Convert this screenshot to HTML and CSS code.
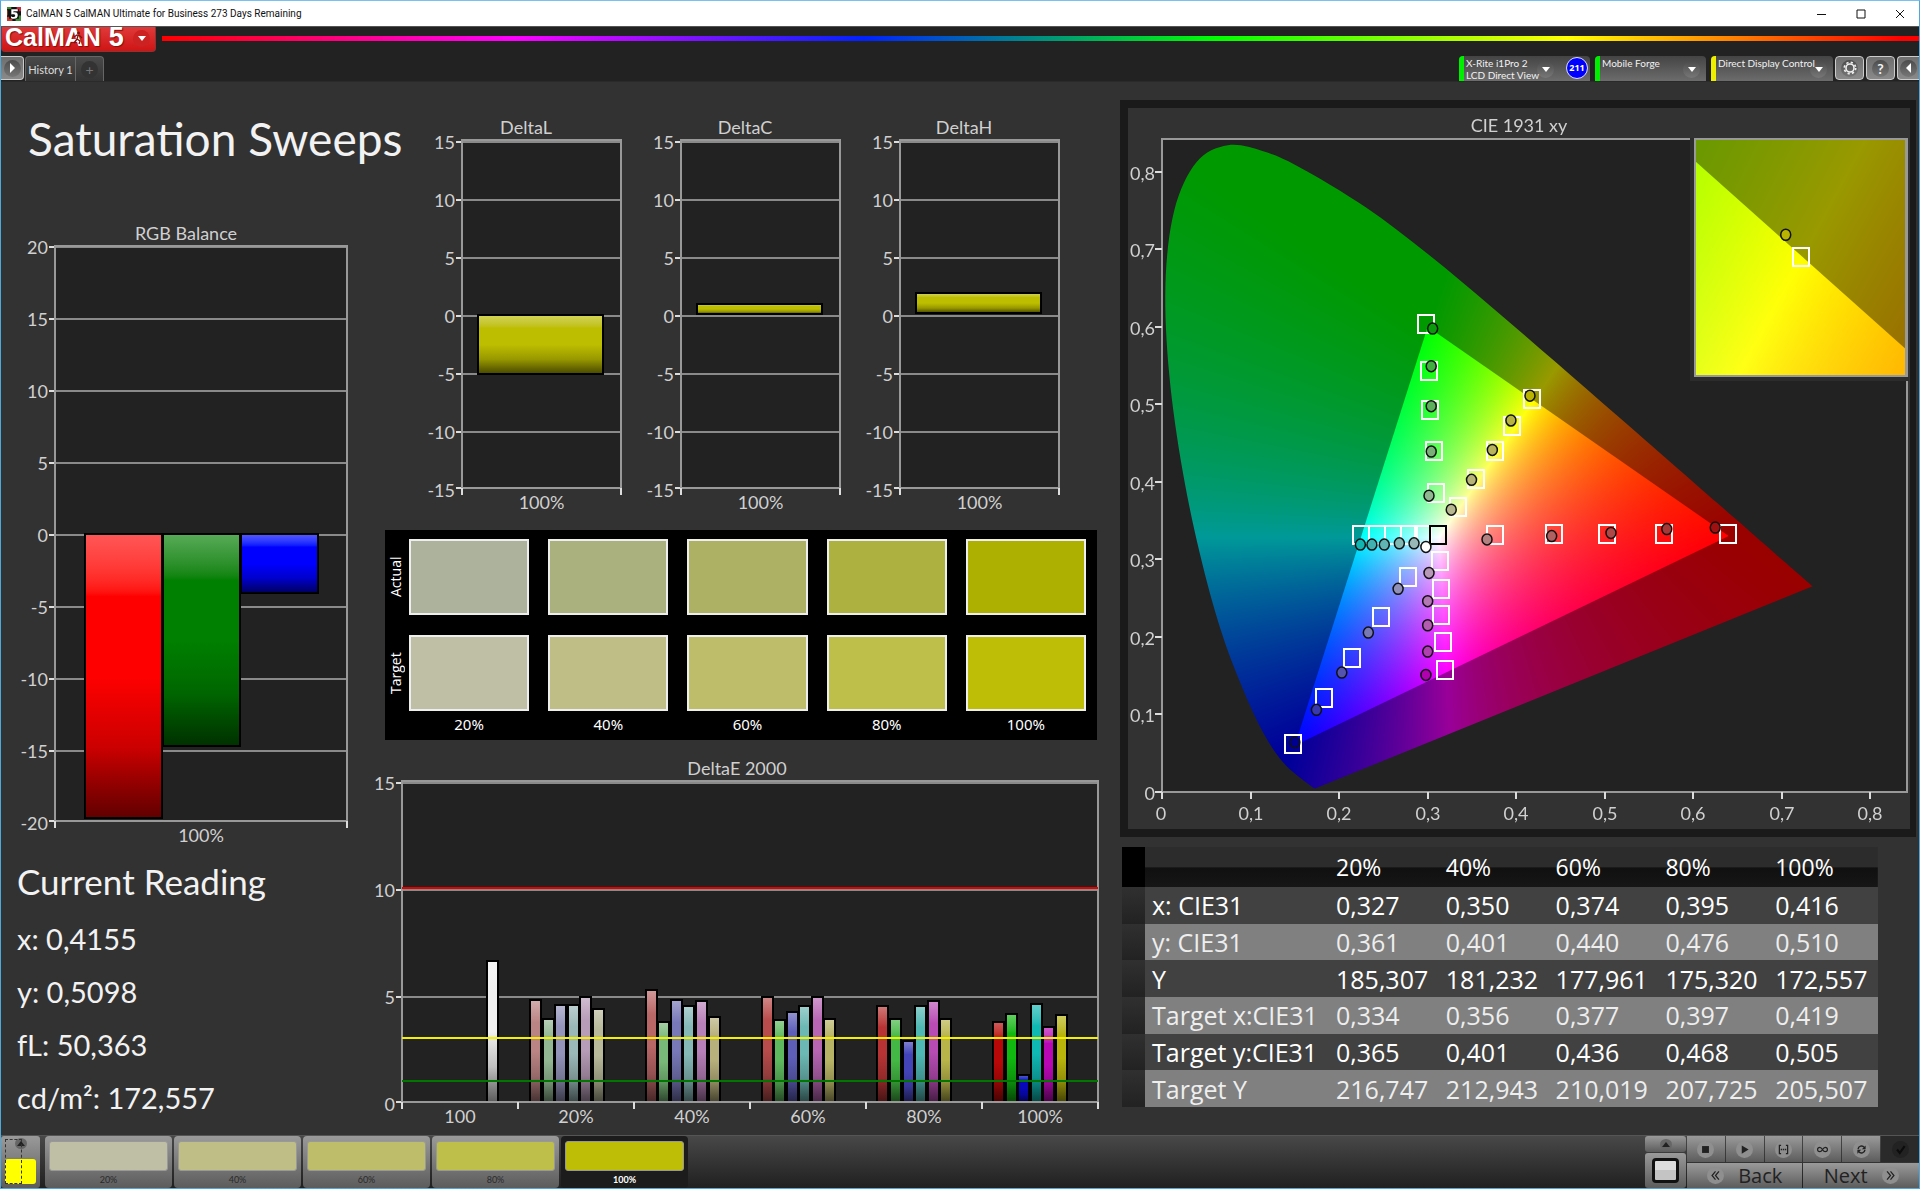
FILE: index.html
```html
<!DOCTYPE html>
<html lang="en">
<head>
<meta charset="utf-8">
<title>CalMAN 5 CalMAN Ultimate for Business</title>
<meta name="viewport" content="width=device-width, initial-scale=1">
<link rel="stylesheet" href="styles.css">
</head>
<body>
<div class="titlebar">
  <svg class="app-icon" viewBox="0 0 13 13" aria-hidden="true">
    <rect width="13" height="13" fill="#111"/>
    <path d="M0 0h4v2H0z" fill="#3a8f2c"/><path d="M9 0h4v4h-2V2H9z" fill="#c02a3a"/><path d="M0 9h2v2h3v2H0z" fill="#c23b2c"/><path d="M11 8h2v5H8v-2h3z" fill="#3d8a36"/><path d="M0 3h1v5H0z" fill="#7a3d1b"/>
    <path d="M4 2h6v2H6v1c3-.4 4 .6 4 2.700 0 2.300-1.500 3.300-3.500 3.300-1.200 0-2.200-.300-2.800-.800V8.500c.7.500 1.500.8 2.400.8.900 0 1.500-.500 1.500-1.400 0-1.200-1.500-1.300-3.600-1z" fill="#fff"/>
  </svg>
  <span class="caption">CalMAN 5 CalMAN Ultimate for Business 273 Days Remaining</span>
  <div class="window-buttons">
    <button aria-label="Minimize"><svg viewBox="0 0 10 10"><path d="M0 5.500h9"/></svg></button>
    <button aria-label="Maximize"><svg viewBox="0 0 10 10"><path d="M1 1h8v8H1z"/></svg></button>
    <button aria-label="Close"><svg viewBox="0 0 10 10"><path d="M1 1l8 8M9 1L1 9"/></svg></button>
  </div>
</div>

<header class="header">
  <div class="brand-row">
    <button class="brand" aria-label="CalMAN 5 menu">
      <span class="brand-name">CalMAN</span><span class="brand-number">5</span>
      <svg class="runner" viewBox="0 0 12 14" aria-hidden="true"><circle cx="6.500" cy="2" r="1.500" fill="#7c1010"/><path d="M2 6l3-2 3 1 2 2M6 5L5 8l3 2-1 3M5 8l-3 4" fill="none" stroke="#7c1010" stroke-width="1.300"/></svg>
      <span class="brand-arrow"><i class="tri-down"></i></span>
    </button>
    <div class="rainbow"></div>
  </div>
  <div class="tab-row">
    <button class="square flush-left" aria-label="Expand panel"><span class="knob"><i class="tri-right"></i></span></button>
    <nav class="tabs">
      <button class="tab">History 1</button>
      <button class="tab add" aria-label="Add history"><span class="knob dim">+</span></button>
    </nav>
    <div class="devices">
      <div class="device meter">
        <button class="device-main ok"><span class="device-name">X-Rite i1Pro 2<br>LCD Direct View</span><span class="knob"><i class="tri-down"></i></span></button>
        <span class="count">211</span>
      </div>
      <div class="device source"><button class="device-main ok"><span class="device-name">Mobile Forge</span><span class="knob"><i class="tri-down"></i></span></button></div>
      <div class="device display"><button class="device-main warn"><span class="device-name">Direct Display Control</span><span class="knob"><i class="tri-down"></i></span></button></div>
      <div class="tools">
        <button class="square" aria-label="Settings"><span class="knob"><svg viewBox="0 0 14 14"><circle cx="7" cy="7" r="4" fill="none" stroke="#eee" stroke-width="1.600"/><circle cx="7" cy="7" r="5.700" fill="none" stroke="#eee" stroke-width="1.700" stroke-dasharray="2.240 2.240"/></svg></span></button>
        <button class="square help" aria-label="Help"><span class="knob">?</span></button>
        <button class="square flush-right" aria-label="Collapse panel"><span class="knob"><i class="tri-left"></i></span></button>
      </div>
    </div>
  </div>
</header>

<main class="workspace">
  <section class="col-left">
    <h1>Saturation Sweeps</h1>
    <svg class="chart" id="rgb-balance" viewBox="0 0 384 632" role="img" aria-label="RGB Balance"></svg>
    <div class="reading">
      <h2>Current Reading</h2>
      <p>x: 0,4155</p>
      <p>y: 0,5098</p>
      <p>fL: 50,363</p>
      <p>cd/m²: 172,557</p>
    </div>
  </section>

  <section class="col-mid">
    <div class="deltas">
      <svg class="chart" id="delta-l" viewBox="0 0 219 406" role="img" aria-label="DeltaL"></svg>
      <svg class="chart" id="delta-c" viewBox="0 0 219 406" role="img" aria-label="DeltaC"></svg>
      <svg class="chart" id="delta-h" viewBox="0 0 219 406" role="img" aria-label="DeltaH"></svg>
    </div>
    <div class="swatches">
      <span class="side">Actual</span>
      <i class="a20"></i><i class="a40"></i><i class="a60"></i><i class="a80"></i><i class="a100"></i>
      <span class="side">Target</span>
      <i class="t20"></i><i class="t40"></i><i class="t60"></i><i class="t80"></i><i class="t100"></i>
      <span></span><b>20%</b><b>40%</b><b>60%</b><b>80%</b><b>100%</b>
    </div>
    <svg class="chart" id="delta-e" viewBox="0 0 727 380" role="img" aria-label="DeltaE 2000"></svg>
  </section>

  <section class="col-right">
    <div class="cie">
      <canvas id="cie-field" width="782" height="721"></canvas>
      <svg class="chart" id="cie-chart" viewBox="0 0 782 721" role="img" aria-label="CIE 1931 xy"></svg>
    </div>
    <table class="data">
      <colgroup><col class="c-gutter"><col class="c-name"><col><col><col><col><col></colgroup>
      <thead><tr><td class="gutter"></td><td></td><th scope="col">20%</th><th scope="col">40%</th><th scope="col">60%</th><th scope="col">80%</th><th scope="col">100%</th></tr></thead>
      <tbody>
        <tr><td class="gutter"></td><th scope="row">x: CIE31</th><td>0,327</td><td>0,350</td><td>0,374</td><td>0,395</td><td>0,416</td></tr>
        <tr><td class="gutter"></td><th scope="row">y: CIE31</th><td>0,361</td><td>0,401</td><td>0,440</td><td>0,476</td><td>0,510</td></tr>
        <tr><td class="gutter"></td><th scope="row">Y</th><td>185,307</td><td>181,232</td><td>177,961</td><td>175,320</td><td>172,557</td></tr>
        <tr><td class="gutter"></td><th scope="row">Target x:CIE31</th><td>0,334</td><td>0,356</td><td>0,377</td><td>0,397</td><td>0,419</td></tr>
        <tr><td class="gutter"></td><th scope="row">Target y:CIE31</th><td>0,365</td><td>0,401</td><td>0,436</td><td>0,468</td><td>0,505</td></tr>
        <tr><td class="gutter"></td><th scope="row">Target Y</th><td>216,747</td><td>212,943</td><td>210,019</td><td>207,725</td><td>205,507</td></tr>
      </tbody>
    </table>
  </section>
</main>

<footer class="footer">
  <button class="pattern" aria-label="Pattern colour"><span class="mini"><i class="tri-up"></i></span><i class="patch"></i></button>
  <div class="levels">
    <button class="level"><i class="t20"></i>20%</button>
    <button class="level"><i class="t40"></i>40%</button>
    <button class="level"><i class="t60"></i>60%</button>
    <button class="level"><i class="t80"></i>80%</button>
    <button class="level current"><i class="t100"></i>100%</button>
  </div>
  <div class="transport">
    <div class="window-pick">
      <button aria-label="Show options"><span class="mini"><i class="tri-up"></i></span></button>
      <button aria-label="Window size"><i class="frame"></i></button>
    </div>
    <div class="actions">
      <button aria-label="Stop"><span class="disc"><svg viewBox="0 0 16 16"><path d="M3 3h10v10H3z"/></svg></span></button>
      <button aria-label="Read"><span class="disc"><svg viewBox="0 0 16 16"><path d="M4 2l10 6-10 6z"/></svg></span></button>
      <button aria-label="Read series"><span class="disc"><svg viewBox="0 0 16 16"><path d="M4.500 2H2v12h2.500M11.500 2H14v12h-2.500" fill="none" stroke="#222" stroke-width="1.800"/><path d="M4 7h2v2H4zM7 7h2v2H7zM10 7h2v2h-2z"/></svg></span></button>
      <button aria-label="Continuous"><span class="disc"><svg viewBox="0 0 16 16"><path d="M8 8C6.500 5.500 5.500 4.800 4 4.800a3.200 3.200 0 0 0 0 6.400C5.500 11.200 6.500 10.500 8 8s2.500-3.200 4-3.200a3.200 3.200 0 0 1 0 6.400C10.500 11.200 9.500 10.500 8 8z" fill="none" stroke="#222" stroke-width="1.800"/></svg></span></button>
      <button aria-label="Refresh"><span class="disc"><svg viewBox="0 0 16 16"><path d="M3 7.500a5 5 0 0 1 9-2.500M13 8.500a5 5 0 0 1-9 2.500" fill="none" stroke="#222" stroke-width="2"/><path d="M14 2v5.500H8.500zM2 14V8.500h5.500z"/></svg></span></button>
      <button class="off" aria-label="Accept"><span class="disc"><svg viewBox="0 0 16 16"><path d="M3 8l4 5 7-10" fill="none" stroke="#0c0c0c" stroke-width="3"/></svg></span></button>
      <button class="nav"><span class="disc"><svg viewBox="0 0 16 16"><path d="M8 2L3 8l5 6M13 2L8 8l5 6" fill="none" stroke="#222" stroke-width="1.800"/></svg></span>Back</button>
      <button class="nav next">Next<span class="disc"><svg viewBox="0 0 16 16"><path d="M8 2l5 6-5 6M3 2l5 6-5 6" fill="none" stroke="#222" stroke-width="1.800"/></svg></span></button>
    </div>
  </div>
</footer>
<script src="charts.js"></script>
</body>
</html>
```
FILE: styles.css
```css
* { box-sizing: border-box; }

body {
  margin: 0;
  min-height: 100vh;
  display: flex;
  flex-direction: column;
  border: 1px solid #4fa8dc;
  border-top-color: #79c1ee;
  background: #323232;
  color: #f2f2f2;
  font-family: Lato, "Open Sans", sans-serif;
}

button {
  margin: 0;
  padding: 0;
  border: 0;
  background: none;
  color: inherit;
  font: inherit;
}

i { display: block; }

.tri-down, .tri-up { width: 0; border: 4px solid transparent; }
.tri-down { border-top: 5px solid #fff; border-bottom: 0; }
.tri-up { border-bottom: 5px solid #222; border-top: 0; }
.tri-right, .tri-left { width: 0; border: 5px solid transparent; }
.tri-right { border-left-color: #fff; border-right: 0; }
.tri-left { border-right-color: #fff; border-left: 0; }

/* Window title bar */
.titlebar {
  display: flex;
  align-items: center;
  height: 25px;
  padding-left: 6px;
  background: #fff;
  color: #111;
}
.app-icon { width: 14px; height: 14px; }
.caption { margin-left: 5px; font: 10px/16px Roboto, sans-serif; }
.window-buttons { display: flex; margin-left: auto; }
.window-buttons button { display: grid; place-items: center; width: 39px; height: 24px; }
.window-buttons svg { width: 10px; height: 10px; fill: none; stroke: #111; }

/* Application header */
.header { background: #222; border-top: 1px solid #555; }
.brand-row { display: flex; height: 29px; }
.brand {
  position: relative;
  display: flex;
  align-items: center;
  width: 155px;
  height: 25px;
  padding: 0 0 5px 3px;
  border: 1px solid #8d3333;
  border-top: 0;
  border-radius: 0 0 4px 4px;
  background: linear-gradient(#e03a3a, #cf1414);
  color: #fff;
  font: bold 25px/20px "Liberation Sans", sans-serif;
  text-shadow: 1px 1px 1px #7c1010;
}
.brand-number { margin-left: 8px; font-size: 27px; }
.runner { position: absolute; left: 70px; top: 4px; width: 12px; height: 14px; }
.brand-arrow {
  display: grid;
  place-items: center;
  width: 17px;
  height: 17px;
  margin: 4px 5px 0 auto;
  border-radius: 50%;
  background: #c22;
}
.rainbow {
  flex: 1;
  height: 5px;
  margin: 9px 0 0 6px;
  background: linear-gradient(90deg, #f00 0%, #f0f 20%, #02f 40%, #0f0 60%, #ff0 80%, #f00 99%);
}

.tab-row { display: flex; height: 25px; }
.square {
  display: grid;
  place-items: center;
  width: 29px;
  height: 24px;
  border: 1px solid #ccc;
  border-radius: 4px;
  background: linear-gradient(#6e6e6e, #8a8a8a);
}
.flush-left { width: 23px; border-left: 0; border-radius: 0 4px 4px 0; }
.flush-right { width: 22px; border-right: 0; border-radius: 4px 0 0 4px; }
.knob {
  display: grid;
  place-items: center;
  flex: none;
  width: 17px;
  height: 17px;
  border-radius: 50%;
  background: linear-gradient(#4c4c4c, #777);
  font-weight: bold;
  font-size: 14px;
  line-height: 17px;
}
.knob svg { width: 14px; height: 14px; }
.knob.dim { background: #333; color: #777; font-weight: normal; }
.tabs { display: flex; margin-left: 1px; }
.tab {
  width: 51px;
  border: 1px solid #666;
  border-bottom: 0;
  border-radius: 4px 0 0 0;
  background: linear-gradient(#4a4a4a, #333);
  color: #ddd;
  font-size: 11px;
}
.tab.add { display: grid; place-items: center; width: 28px; border-left: 0; border-radius: 0 4px 0 0; }

.devices { display: flex; margin-left: auto; }
.device {
  display: flex;
  margin-right: 5px;
  overflow: hidden;
  border-radius: 4px 4px 0 0;
  background: linear-gradient(#444, #6c6c6c);
}
.device-main {
  flex: 1;
  display: flex;
  min-width: 0;
  padding: 1px 6px 0 2px;
  border-left: 5px solid #0e0;
  font-size: 10px;
  line-height: 12px;
  text-align: left;
  white-space: nowrap;
}
.device-name { z-index: 1; flex: 1; min-width: 0; }
.device-main .knob { margin-top: 4px; }
.warn { border-left-color: #ee0; }
.meter { width: 131px; }
.meter .device-main { padding-right: 12px; }
.source { width: 111px; }
.display { width: 122px; margin-right: 2px; }
.count {
  flex: none;
  width: 22px;
  height: 22px;
  margin: 1px 2px 0 0;
  border: 1px solid #ddf;
  border-radius: 50%;
  background: #00f;
  color: #fff;
  font: bold 9px/20px "Open Sans", sans-serif;
  text-align: center;
}
.tools { display: flex; gap: 2px; }

/* Workspace */
.workspace {
  flex: 1;
  display: grid;
  grid-template-columns: minmax(0, 384fr) minmax(0, 727fr) minmax(0, 807fr);
  align-items: start;
  border-top: 1px solid #2a2a2a;
}
.chart { display: block; width: 100%; overflow: visible; }
.chart text { fill: #d0d0d0; font-size: 18px; }

h1 { margin: 13px 0 39px 27px; font-weight: normal; font-size: 46px; line-height: 88px; white-space: nowrap; }
h2 { margin: 0 0 4px; font-weight: normal; font-size: 35px; line-height: 54px; }
.reading { padding: 0 0 0 16px; }
.reading p { margin: 0; font-size: 29px; line-height: 53px; }

.deltas { display: grid; grid-template-columns: repeat(3, 1fr); padding: 30px 25px 0 45px; }
.swatches {
  display: grid;
  grid-template: 76px 76px 25px / 5px repeat(5, 1fr);
  gap: 20px 19px;
  height: 210px;
  margin: 12px 15px 12px 0;
  padding: 9px 11px 0 0;
  background: #000;
}
.swatches i { border: 2px solid #eee; }
.swatches .side {
  width: 22px;
  height: 76px;
  writing-mode: vertical-rl;
  rotate: 180deg;
  color: #fff;
  font: 14px/22px "Open Sans", sans-serif;
  text-align: center;
}
.swatches b { margin-top: -20px; color: #fff; font: 15px/26px "Noto Sans", sans-serif; text-align: center; }

.a20 { background: #adb29c; }
.a40 { background: #aab17f; }
.a60 { background: #acb164; }
.a80 { background: #adb140; }
.a100 { background: #adb000; }
.t20 { background: #bfbfa5; }
.t40 { background: #bfbe87; }
.t60 { background: #bebe6a; }
.t80 { background: #bebe4b; }
.t100 { background: #bebe06; }

.col-right { padding: 18px 3px 0 8px; }
.cie { position: relative; border: 8px solid #1a1a1a; border-right-width: 6px; }
.cie canvas { position: absolute; left: 0; top: 0; width: 100%; height: 100%; }
.cie .chart { position: relative; }

.data {
  width: 756px;
  max-width: 100%;
  height: 260px;
  margin: 10px 0 0 2px;
  table-layout: fixed;
  border-collapse: collapse;
  font: 25px/30px "Open Sans", sans-serif;
  color: #fff;
}
.data th { font-weight: normal; text-align: left; }
.data td, .data th { padding: 0 0 0 7px; white-space: nowrap; }
.c-gutter { width: 23px; }
.c-name { width: 184px; }
.data thead tr { height: 40px; background: linear-gradient(#2c2c2c 50%, #101010 52%, #161616); font-size: 23px; }
.data tbody tr { background: #414141; }
.data tbody tr:nth-child(even) { background: #808080; color: #eee; }
.data .gutter { padding: 0; background: linear-gradient(#303030, #222); }
.data thead .gutter { background: #000; }

/* Bottom bar */
.footer {
  display: flex;
  height: 53px;
  border-top: 1px solid #555;
  background: linear-gradient(#484848, #202020);
}
.footer button { background: linear-gradient(#9a9a9a, #5c5c5c); }
.mini { display: grid; place-items: center; width: 12px; height: 11px; margin: 0 auto; border-radius: 50%; background: #666; }
.pattern { position: relative; width: 39px; padding: 0 4px 2px; border-radius: 3px; }
.pattern::after { content: ""; position: absolute; inset: 3px 18px 4px 4px; border: 1px dashed #333; }
.patch { height: 25px; margin-top: 10px; border-radius: 3px; background: #ff0; }
.levels { display: flex; gap: 2px; margin-left: 5px; }
.level { width: 127px; padding: 5px 4px 0; border-radius: 4px; color: #2a2a2a; font-size: 9px; line-height: 18px; }
.level i { height: 30px; border: 1px solid #999; border-radius: 3px; }
.footer .current { background: #1c1c1c; color: #fff; font-weight: bold; }
.transport { display: flex; gap: 1px; margin-left: auto; }
.window-pick { display: grid; grid-template-rows: 16px 1fr; gap: 1px; width: 41px; }
.window-pick button { display: grid; place-items: center; border-radius: 3px; }
.frame { width: 27px; height: 25px; border: 3px solid #111; border-radius: 4px; background: linear-gradient(#ddd 50%, #c4c4c4 50%); }
.actions { display: grid; grid-template: 26px 1fr / repeat(6, 1fr); gap: 1px; width: 232px; }
.actions button { display: flex; align-items: center; justify-content: center; gap: 14px; }
.footer .off { background: #2a2a2a; }
.disc { width: 17px; height: 17px; border-radius: 50%; background: #8f8f8f; }
.disc svg { display: block; width: 17px; height: 17px; padding: 3px; fill: #222; }
.off .disc { background: #222; }
.actions .nav { grid-column: span 3; color: #222; font: 20px/24px "Open Sans", sans-serif; }
```
FILE: charts.js
```js
const NS = 'http://www.w3.org/2000/svg';

function add(parent, name, attrs, text) {
  const node = document.createElementNS(NS, name);
  for (const key in attrs) node.setAttribute(key, attrs[key]);
  if (text !== undefined) node.textContent = text;
  parent.appendChild(node);
  return node;
}

const line = (svg, x1, y1, x2, y2, stroke, width) =>
  add(svg, 'line', { x1, y1, x2, y2, stroke, 'stroke-width': width });

// Glossy vertical gradient: light at the top, dark at the foot
function glossy(svg, color) {
  const id = svg.id + '-' + color.slice(1);
  if (!document.getElementById(id)) {
    const g = add(svg, 'linearGradient', { id, x1: 0, y1: 0, x2: 0, y2: 1 });
    const stop = (offset, c) => add(g, 'stop', { offset, style: 'stop-color:' + c });
    stop(0, `color-mix(in srgb, ${color} 66%, white)`);
    stop(0.22, color);
    stop(0.5, color);
    stop(0.75, `color-mix(in srgb, ${color} 80%, black)`);
    stop(1, `color-mix(in srgb, ${color} 38%, black)`);
  }
  return `url(#${id})`;
}

function bar(svg, x, y, w, h, color) {
  add(svg, 'rect', { x: x + 1, y: y + 1, width: w - 2, height: h - 2, fill: glossy(svg, color), stroke: '#000', 'stroke-width': 2 });
}

function barChart(id, o) {
  const svg = document.getElementById(id);
  add(svg, 'rect', { x: o.l, y: o.t, width: o.r - o.l, height: o.b - o.t, fill: '#222' });
  for (let v = o.min; v <= o.max; v += 5) {
    const y = Math.min(Math.round(o.zero - v * o.unit), o.b);
    line(svg, o.l, y, o.r, y, '#8a8a8a', 2);
    line(svg, o.l - 6, y, o.l, y, '#ddd', 2);
    add(svg, 'text', { x: o.l - 7, y: Math.round(o.zero - v * o.unit) + 7, 'text-anchor': 'end' }, v);
  }
  o.bars.forEach(b => bar(svg, ...b));
  add(svg, 'rect', { x: o.l, y: o.t, width: o.r - o.l, height: o.b - o.t, fill: 'none', stroke: '#999', 'stroke-width': 2 });
  const step = (o.r - o.l) / o.labels.length;
  for (let i = 0; i <= o.labels.length; i++) line(svg, o.l + i * step, o.b, o.l + i * step, o.b + 7, '#ddd', 2);
  o.labels.forEach((t, i) => add(svg, 'text', { x: o.l + (i + 0.5) * step, y: o.b + 21, 'text-anchor': 'middle' }, t));
  add(svg, 'text', { x: o.titleX, y: o.t - 6, 'text-anchor': 'middle' }, o.title);
  return svg;
}

barChart('rgb-balance', {
  title: 'RGB Balance', titleX: 185, l: 54, r: 346, t: 24, b: 599, zero: 313, unit: 14.38, min: -20, max: 20, labels: ['100%'],
  bars: [[83, 311, 79, 286, '#ff0000'], [161, 311, 79, 214, '#008000'], [239, 311, 79, 61, '#0000ff']]
});

const delta = (id, title, top, height) => barChart(id, {
  title, titleX: 96, l: 32, r: 191, t: 28, b: 376, zero: 204, unit: 11.58, min: -15, max: 15, labels: ['100%'],
  bars: [[47, top, 127, height, '#bebe00']]
});
delta('delta-l', 'DeltaL', 202, 61);
delta('delta-c', 'DeltaC', 191, 12);
delta('delta-h', 'DeltaH', 180, 22);

// Bar tops in chart units, one row per saturation level: R G B C M Y
const levels = [
  [247, 266, 252, 252, 244, 256],
  [237, 269, 247, 253, 248, 264],
  [244, 267, 259, 253, 244, 266],
  [253, 266, 288, 253, 248, 266],
  [269, 261, 322, 251, 274, 262]
];
const barColors = [
  ['#bb8484', '#93b793', '#9494bb', '#9bb8b8', '#b89db8', '#b8b89a'],
  ['#b96666', '#78b878', '#7878b9', '#86b8b8', '#b880b8', '#b8b07c'],
  ['#b84c4c', '#5eb85e', '#5e5eb9', '#6cb8b4', '#b866b4', '#b8b466'],
  ['#b83434', '#44b844', '#4444b9', '#50b8b4', '#b84cb4', '#b8b44a'],
  ['#b80808', '#10b810', '#0808b8', '#10b8b4', '#b808b4', '#b8b40c']
];
const deBars = [[101, 208, 13, 143, '#f0f0f0']];
levels.forEach((row, i) => row.forEach((top, j) => {
  deBars.push([Math.round(144 + i * 115.8 + j * 12.55), top, 13, 351 - top, barColors[i][j]]);
}));
const de = barChart('delta-e', {
  title: 'DeltaE 2000', titleX: 352, l: 17, r: 713, t: 29, b: 350, zero: 352, unit: 21.4, min: 0, max: 15,
  labels: ['100', '20%', '40%', '60%', '80%', '100%'], bars: deBars
});
line(de, 17, 136, 713, 136, '#e00000', 2);
line(de, 17, 286, 713, 286, '#f4f000', 2);
line(de, 17, 329, 713, 329, '#007800', 2);

// CIE 1931 chromaticity diagram
const plot = { l: 34, r: 779, t: 31, b: 684, sx: 885.6, sy: 775.6 };
const toX = x => plot.l + x * plot.sx;
const toY = y => plot.b - y * plot.sy;
const locus = [
  [.1741, .005], [.1714, .0051], [.1644, .0109], [.1566, .0177], [.144, .0297], [.1355, .0399], [.1241, .0578],
  [.1096, .0868], [.0913, .1327], [.0687, .2007], [.0454, .295], [.0235, .4127], [.0082, .5384], [.0039, .6548],
  [.0139, .7502], [.0389, .812], [.0743, .8338], [.1142, .8262], [.1547, .8059], [.2296, .7543], [.3016, .6923],
  [.3731, .6245], [.4441, .5547], [.5125, .4866], [.5752, .4242], [.627, .3725], [.6658, .334], [.6915, .3083],
  [.719, .2809], [.7347, .2653]
];
const primaries = [[.64, .33], [.3, .6], [.15, .06]];

function locusPath(fx, fy) {
  const p = locus.map(([x, y]) => [fx(x), fy(y)]);
  const path = new Path2D();
  path.moveTo(...p[0]);
  for (let i = 0; i < p.length - 1; i++) {
    const a = p[Math.max(i - 1, 0)], b = p[i], c = p[i + 1], d = p[Math.min(i + 2, p.length - 1)];
    path.bezierCurveTo(b[0] + (c[0] - a[0]) / 6, b[1] + (c[1] - a[1]) / 6, c[0] - (d[0] - b[0]) / 6, c[1] - (d[1] - b[1]) / 6, c[0], c[1]);
  }
  path.closePath();
  return path;
}

function trianglePath(fx, fy) {
  const path = new Path2D();
  primaries.forEach(([x, y], i) => path[i ? 'lineTo' : 'moveTo'](fx(x), fy(y)));
  path.closePath();
  return path;
}

function field(w, h, fromX, fromY, level) {
  const canvas = document.createElement('canvas');
  canvas.width = w;
  canvas.height = h;
  const ctx = canvas.getContext('2d');
  const img = ctx.createImageData(w, h);
  for (let j = 0, k = 0; j < h; j++) {
    for (let i = 0; i < w; i++, k += 4) {
      const x = fromX(i), y = Math.max(fromY(j), 0.001), z = 1 - x - y;
      const rgb = [
        3.2406 * x - 1.5372 * y - 0.4986 * z,
        -0.9689 * x + 1.8758 * y + 0.0415 * z,
        0.0557 * x - 0.204 * y + 1.057 * z
      ];
      const top = Math.max(...rgb);
      for (let c = 0; c < 3; c++) img.data[k + c] = 255 * level * Math.max(rgb[c], 0) / top;
      img.data[k + 3] = 255;
    }
  }
  ctx.putImageData(img, 0, 0);
  return canvas;
}

const ctx = document.getElementById('cie-field').getContext('2d');
function paint(box, fx, fy, fromX, fromY) {
  [[locusPath(fx, fy), 0.6], [trianglePath(fx, fy), 1]].forEach(([path, level]) => {
    ctx.save();
    ctx.beginPath();
    ctx.rect(box.x, box.y, box.w, box.h);
    ctx.clip();
    ctx.clip(path);
    ctx.drawImage(field(box.w, box.h, i => fromX(i + box.x), j => fromY(j + box.y), level), box.x, box.y);
    ctx.restore();
  });
}
ctx.fillStyle = '#222';
ctx.fillRect(plot.l, plot.t, plot.r - plot.l, plot.b - plot.t);
paint({ x: 34, y: 31, w: 744, h: 653 }, toX, toY, i => (i - plot.l) / plot.sx, j => (plot.b - j) / plot.sy);

const cie = document.getElementById('cie-chart');
add(cie, 'rect', { x: plot.l, y: plot.t, width: plot.r - plot.l, height: plot.b - plot.t, fill: 'none', stroke: '#999', 'stroke-width': 2 });
for (let i = 0; i <= 8; i++) {
  const label = i ? '0,' + i : '0';
  const x = Math.round(toX(i / 10)), y = Math.round(toY(i / 10));
  line(cie, x, plot.b, x, plot.b + 7, '#ddd', 2);
  line(cie, plot.l - 7, y, plot.l, y, '#ddd', 2);
  add(cie, 'text', { x: i ? x : x - 1, y: plot.b + 28, 'text-anchor': 'middle' }, label);
  add(cie, 'text', { x: plot.l - 7, y: y + 8, 'text-anchor': 'end' }, label);
}
add(cie, 'text', { x: 391, y: 24, 'text-anchor': 'middle' }, 'CIE 1931 xy');

// Target boxes
const targets = [
  [.298, .602], [.3015, .542], [.303, .4906], [.307, .439], [.309, .384],
  [.418, .506], [.3955, .47], [.376, .439], [.355, .4025], [.334, .366],
  [.639, .332], [.567, .332], [.503, .332], [.443, .332], [.376, .33],
  [.225, .33], [.243, .33], [.261, .33], [.2785, .33], [.295, .33],
  [.3144, .296], [.3155, .26], [.3155, .2275], [.317, .192], [.3196, .156],
  [.278, .276], [.247, .224], [.215, .171], [.183, .12], [.148, .0606]
];
const box = (cx, cy, stroke) =>
  add(cie, 'rect', { x: Math.round(cx) - 8, y: Math.round(cy) - 10, width: 16, height: 18, fill: 'none', stroke, 'stroke-width': 2 });
const dot = (cx, cy, fill) => add(cie, 'ellipse', { cx, cy, rx: 5, ry: 5.5, fill, stroke: '#111', 'stroke-width': 1.5 });
targets.forEach(([x, y]) => box(toX(x), toY(y), '#fff'));
box(toX(.312), toY(.33), '#000');

// Measured points
const measured = [
  [.3056, .5975, '#0b9a0b'], [.304, .549, '#3fae3f'], [.304, .4975, '#5cb05c'], [.304, .439, '#78b078'], [.3015, .382, '#90b890'],
  [.4155, .511, '#b8b400'], [.394, .479, '#b8b440'], [.373, .441, '#b8b45c'], [.3495, .4025, '#b8b478'], [.3266, .364, '#b8b890'],
  [.6247, .341, '#a01010'], [.57, .339, '#a83838'], [.507, .334, '#b04848'], [.44, .33, '#b06060'], [.367, .3256, '#b48080'],
  [.224, .319, '#10b4b0'], [.237, .319, '#40b0b0'], [.251, .319, '#60b4b4'], [.268, .3206, '#80b8b4'], [.2846, .3206, '#98b8b8'],
  [.298, .316, '#ffffff'],
  [.3015, .2825, '#b898b8'], [.3, .246, '#b478b4'], [.3, .215, '#b45cb0'], [.3, .181, '#b040b0'], [.298, .151, '#b000b0'],
  [.2666, .262, '#9090b8'], [.233, .2056, '#7878b4'], [.203, .154, '#5454b0'], [.1744, .106, '#3838b0'], [.15, .064, '#000090']
];
measured.forEach(([x, y, fill]) => dot(toX(x), toY(y), fill));

// Magnified inset around the selected target
const inset = { x: 567, y: 31, w: 211, h: 237, cx: .419, cy: .505, span: .05 };
const mx = inset.x + inset.w / 2, my = inset.y + inset.h / 2;
const zx = inset.w / inset.span, zy = inset.h / inset.span;
const insetX = x => mx + (x - inset.cx) * zx, insetY = y => my - (y - inset.cy) * zy;
add(cie, 'path', { d: 'M564 30V271H781', fill: 'none', stroke: '#2c2c2c', 'stroke-width': 4 });
paint(inset, insetX, insetY, i => inset.cx + (i - mx) / zx, j => inset.cy - (j - my) / zy);
add(cie, 'rect', { x: inset.x, y: inset.y, width: inset.w, height: inset.h, fill: 'none', stroke: '#999', 'stroke-width': 2 });
box(insetX(.419), insetY(.505), '#fff');
dot(insetX(.4155), insetY(.5098), '#b8b400');
```
